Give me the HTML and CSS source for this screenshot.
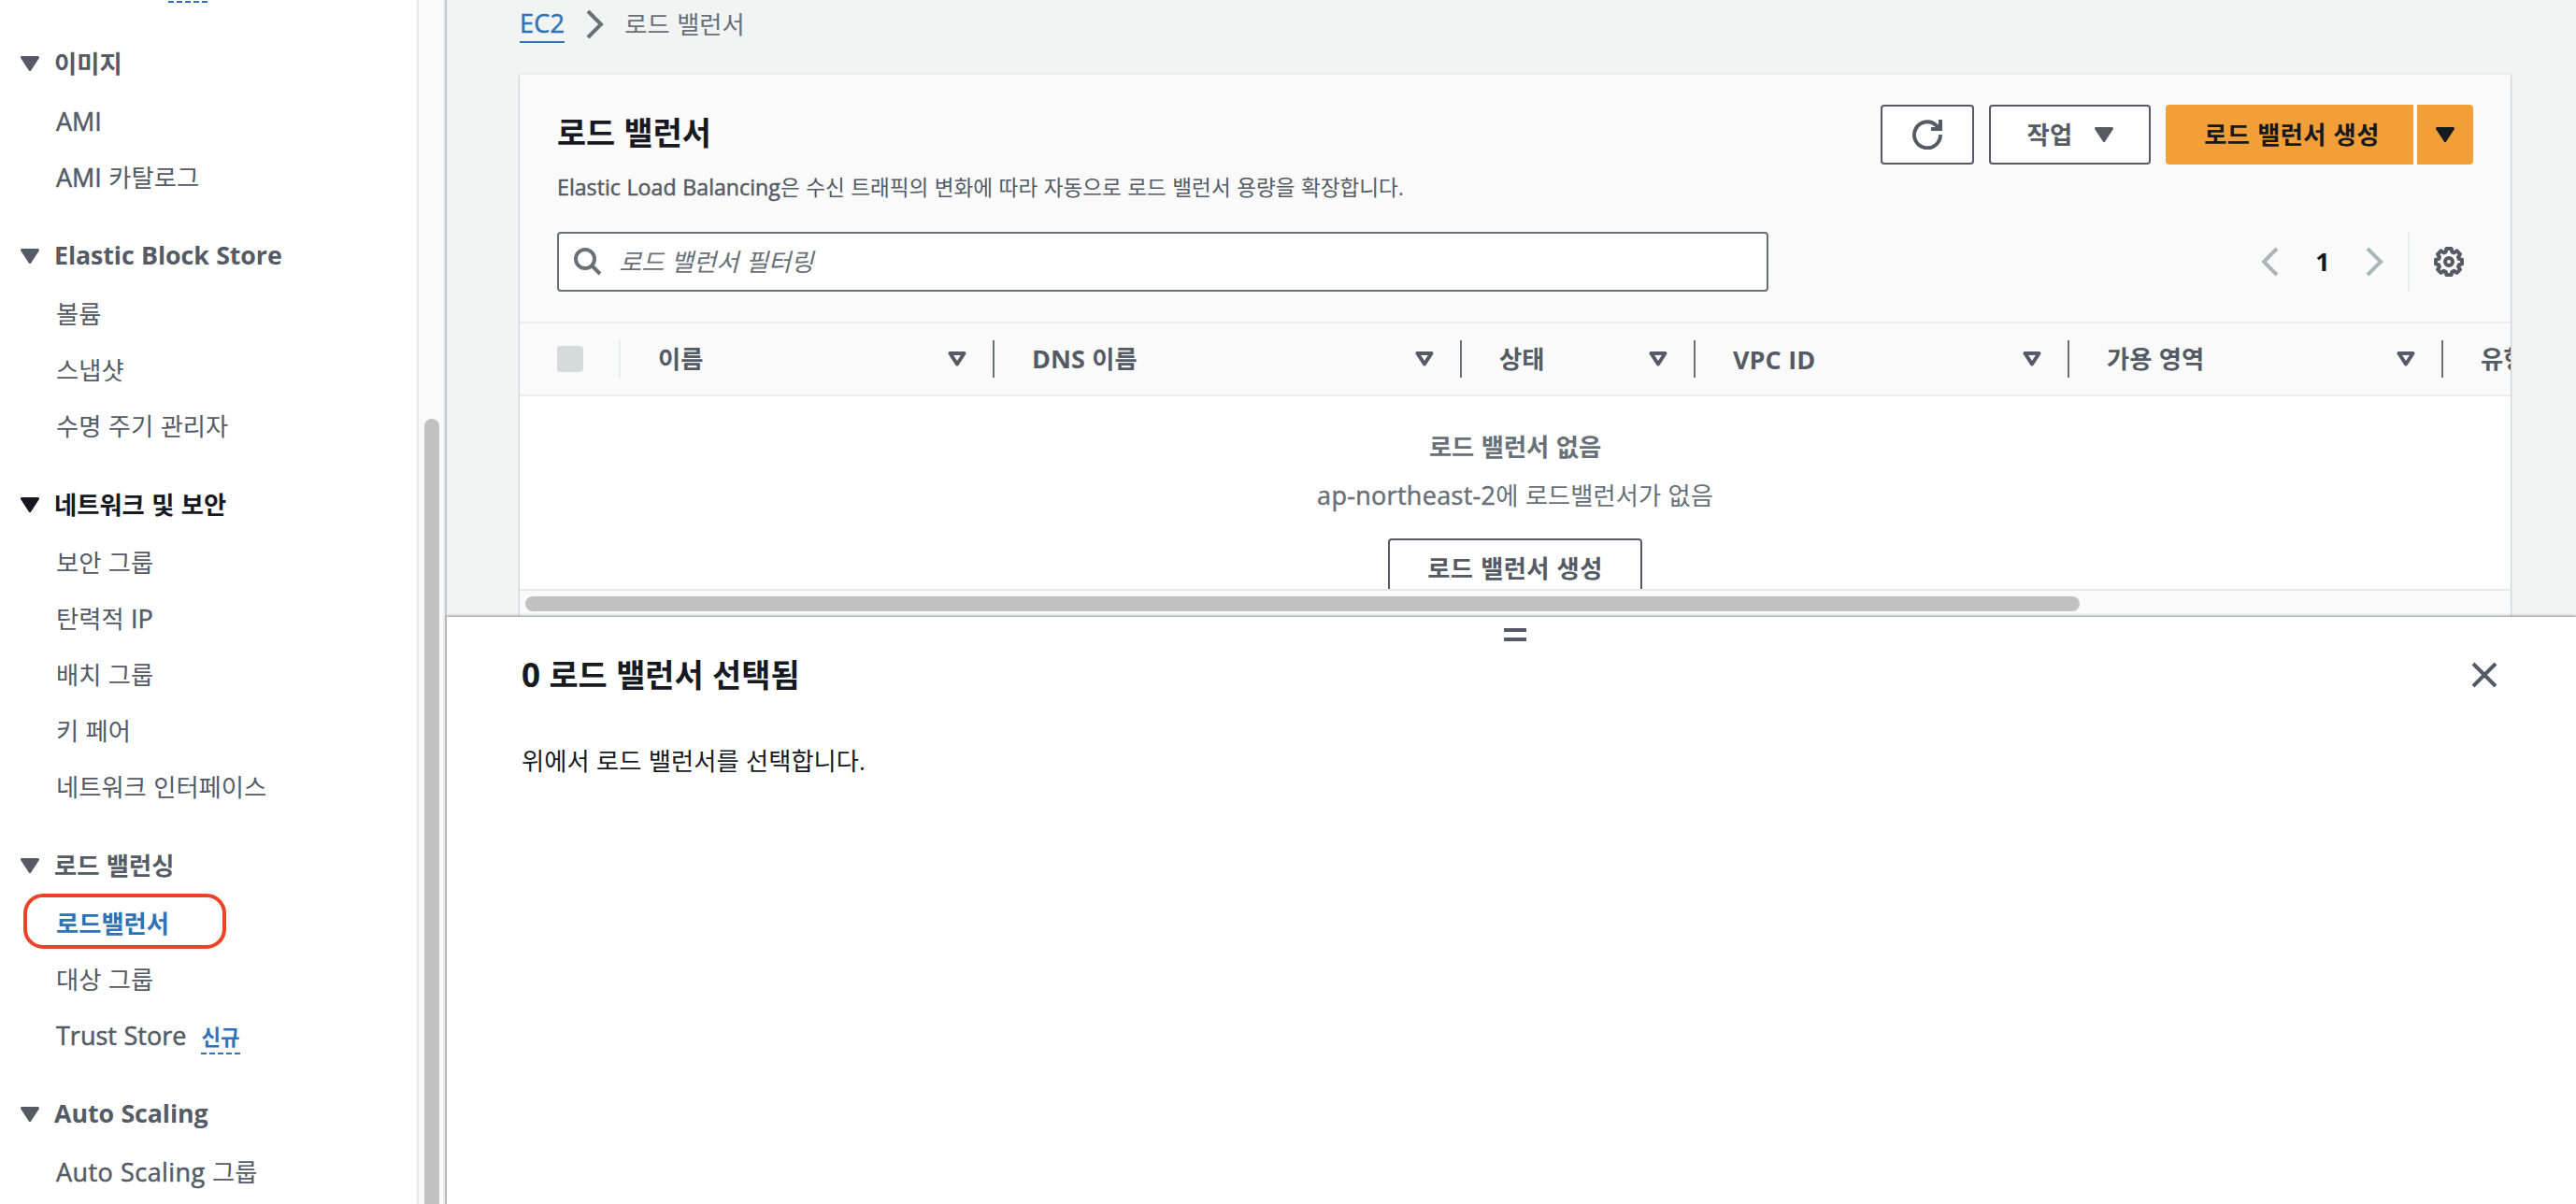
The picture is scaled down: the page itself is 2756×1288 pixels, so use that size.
FILE: index.html
```html
<!DOCTYPE html>
<html lang="ko">
<head>
<meta charset="utf-8">
<title>로드 밸런서 | EC2</title>
<link rel="stylesheet" href="styles.css">
</head>
<body>
<svg class="defs" width="0" height="0">
  <symbol id="caret" viewBox="0 0 20 16"><path d="M1.5 1.5h17L10 14.5z" fill="currentColor" stroke="currentColor" stroke-width="3" stroke-linejoin="round"/></symbol>
  <symbol id="sort" viewBox="0 0 20 16"><path d="M2.5 2h15L10 13.5z" fill="none" stroke="currentColor" stroke-width="4" stroke-linejoin="round"/></symbol>
  <symbol id="chevron" viewBox="0 0 20 32"><path d="M3 2l14 14L3 30" fill="none" stroke="currentColor" stroke-width="4"/></symbol>
</svg>
<div class="app">
  <nav class="side">
    <div class="side-menu">
      <span class="badge-new badge-cut"></span>
      <section>
        <h2><svg class="caret"><use href="#caret"/></svg>이미지</h2>
        <ul><li><span class="en">AMI</span></li><li><span class="en">AMI</span> 카탈로그</li></ul>
      </section>
      <section>
        <h2><svg class="caret"><use href="#caret"/></svg><span class="en">Elastic Block Store</span></h2>
        <ul><li>볼륨</li><li>스냅샷</li><li>수명 주기 관리자</li></ul>
      </section>
      <section>
        <h2 class="dark"><svg class="caret"><use href="#caret"/></svg>네트워크 및 보안</h2>
        <ul><li>보안 그룹</li><li>탄력적 <span class="en">IP</span></li><li>배치 그룹</li><li>키 페어</li><li>네트워크 인터페이스</li></ul>
      </section>
      <section>
        <h2><svg class="caret"><use href="#caret"/></svg>로드 밸런싱</h2>
        <ul><li class="active">로드밸런서</li><li>대상 그룹</li><li><span class="en">Trust Store</span><span class="badge-new">신규</span></li></ul>
      </section>
      <section>
        <h2><svg class="caret"><use href="#caret"/></svg><span class="en">Auto Scaling</span></h2>
        <ul><li><span class="en wide">Auto Scaling</span> 그룹</li></ul>
      </section>
    </div>
    <div class="side-scroll"><div class="side-thumb"></div></div>
  </nav>
  <main class="main">
    <div class="upper">
      <div class="crumbs">
        <a class="en">EC2</a>
        <svg class="chev"><use href="#chevron"/></svg>
        <span>로드 밸런서</span>
      </div>
      <div class="card">
        <header class="card-head">
          <div class="title-row">
            <div class="titles">
              <h1>로드 밸런서</h1>
              <p><span class="en">Elastic Load Balancing</span>은 수신 트래픽의 변화에 따라 자동으로 로드 밸런서 용량을 확장합니다.</p>
            </div>
            <div class="actions">
              <button class="btn refresh"><svg width="34" height="32" viewBox="0 0 34 32"><path d="M31 16A14 14 0 1 1 26.5 6L30 9.5" fill="none" stroke="currentColor" stroke-width="4"/><path d="M31 0V10H21" fill="none" stroke="currentColor" stroke-width="4"/></svg></button>
              <button class="btn menu">작업<svg class="caret"><use href="#caret"/></svg></button>
              <div class="split">
                <button class="btn primary">로드 밸런서 생성</button>
                <button class="btn primary drop"><svg class="caret"><use href="#caret"/></svg></button>
              </div>
            </div>
          </div>
          <div class="tools">
            <div class="search">
              <svg width="30" height="30" viewBox="0 0 30 30"><circle cx="12" cy="12" r="10" fill="none" stroke="currentColor" stroke-width="4"/><path d="M19 19l9 9" stroke="currentColor" stroke-width="4"/></svg>
              <span>로드 밸런서 필터링</span>
            </div>
            <div class="pager">
              <svg class="chev left"><use href="#chevron"/></svg>
              <b class="en">1</b>
              <svg class="chev"><use href="#chevron"/></svg>
              <i class="sep"></i>
              <svg class="gear" width="32" height="32" viewBox="0 0 32 32" fill="none" stroke="currentColor" stroke-width="4" stroke-linejoin="round"><path d="M13.4 2h5.2l.8 3.6 2 .8 3.1-2 3.5 3.6-2 3.1.9 2 3.1.5v4.8l-3.1.8-.9 2 2 3.1-3.5 3.5-3.1-2-2 .9-.8 3.300h-5.200l-.8-3.300-2-.9-3.100 2-3.500-3.500 2-3.100-.9-2-3.100-.8v-4.800l3.100-.5.9-2-2-3.100 3.500-3.600 3.100 2 2-.8z"/><circle cx="16" cy="16" r="4"/></svg>
            </div>
          </div>
        </header>
        <div class="thead">
          <div class="th check"><i class="box"></i></div>
          <div class="th w400">이름<svg class="caret"><use href="#sort"/></svg></div>
          <div class="th w500"><span><span class="en">DNS</span> 이름</span><svg class="caret"><use href="#sort"/></svg></div>
          <div class="th w250">상태<svg class="caret"><use href="#sort"/></svg></div>
          <div class="th w400"><span class="en">VPC ID</span><svg class="caret"><use href="#sort"/></svg></div>
          <div class="th w400">가용 영역<svg class="caret"><use href="#sort"/></svg></div>
          <div class="th w400">유형</div>
        </div>
        <div class="empty">
          <b>로드 밸런서 없음</b>
          <p><span class="en wide">ap-northeast-2</span>에 로드밸런서가 없음</p>
          <button class="btn">로드 밸런서 생성</button>
        </div>
        <div class="hscroll"><div class="hthumb"></div></div>
      </div>
    </div>
    <section class="panel">
      <div class="handle"><i></i><i></i></div>
      <div class="panel-head">
        <h2><span class="en">0</span> 로드 밸런서 선택됨</h2>
        <svg width="28" height="28" viewBox="0 0 28 28"><path d="M2 2l24 24M26 2L2 26" stroke="currentColor" stroke-width="4"/></svg>
      </div>
      <p>위에서 로드 밸런서를 선택합니다.</p>
    </section>
  </main>
  <div class="marker"></div>
</div>
</body>
</html>
```
FILE: styles.css
```css
* { box-sizing: border-box; margin: 0; padding: 0; }
body {
  width: 2756px; height: 1288px; overflow: hidden;
  font-family: "Open Sans", "Noto Sans CJK KR", sans-serif;
  font-size: 26.3px; line-height: 40px; word-spacing: .6px;
  color: #16191f; background: #fff;
}
ul { list-style: none; }
svg { display: block; flex: none; }
.defs { position: absolute; }
.en { font-size: 27px; line-height: 1; }
li .en, p .en, a.en { -webkit-text-stroke: .5px currentColor; }
.wide { letter-spacing: .3px; }
.app { position: relative; display: flex; width: 2756px; height: 1288px; overflow: hidden; }
.caret { width: 20px; height: 16px; }
.chev { width: 20px; height: 32px; }

/* navigation */
.side { display: flex; width: 478px; height: 1288px; color: #545b64; border-right: 2px solid #c3c8cb; }
.side-menu { position: relative; width: 446px; padding-top: 14px; }
.side-menu section { padding-top: 22px; }
.side-menu h2 { display: flex; align-items: center; gap: 16px; height: 64px; padding-left: 22px; font-size: 26.3px; }
.side-menu h2 .en { font-size: 26.8px; letter-spacing: -.1px; padding-bottom: 1px; }
.side-menu h2.dark { color: #16191f; }
.side-menu li { height: 60px; line-height: 60px; padding-left: 60px; white-space: nowrap; }
.side-menu li .wide { letter-spacing: .4px; }
.side-menu li.active { color: #2e73b8; font-weight: 700; }
.badge-new { display: inline-block; margin-left: 16px; height: 34px; line-height: 32px; font-size: 22.4px; font-weight: 700; color: #2e73b8; border-bottom: 2px dashed #2e73b8; }
.badge-cut { position: absolute; left: 164px; top: -31px; width: 42px; }
.side-scroll { width: 30px; height: 1288px; padding: 448px 4px 0 6px; background: #fafafa; border-left: 2px solid #e8e8e8; border-right: 2px solid #ededed; }
.side-thumb { width: 16px; height: 860px; border-radius: 8px; background: #c1c1c1; }
.marker { position: absolute; left: 25px; top: 956px; width: 217px; height: 59px; border: 4px solid #ec4326; border-radius: 21px; }

/* content */
.main { width: 2278px; height: 1288px; }
.upper { height: 660px; padding: 6px 70px 0 78px; background: #f2f3f3; overflow: hidden; }
.crumbs { display: flex; align-items: center; height: 40px; color: #687078; }
.crumbs a { color: #2e73b8; border-bottom: 2px solid #2e73b8; line-height: 38px; height: 40px; letter-spacing: .3px; }
.crumbs .chev { margin: 0 22px; }
.card { margin-top: 32px; height: 582px; border-top: 2px solid #eaeded; background: #fff; box-shadow: 0 2px 2px #889095; }
.card-head { height: 266px; padding: 32px 40px 0; background: #fafafa; border-bottom: 2px solid #eaeded; }
.title-row { display: flex; justify-content: space-between; height: 136px; }
.titles h1 { height: 60px; line-height: 60px; font-size: 33.8px; }
.titles p { margin-top: 9px; height: 40px; font-size: 22.6px; color: #545b64; white-space: nowrap; }
.titles p .en { font-size: 23.2px; }
.actions { display: flex; gap: 16px; height: 64px; }
.btn { display: flex; align-items: center; justify-content: center; height: 64px; padding: 0 40px; border: 2px solid #545b64; border-radius: 4px; background: #fff; color: #545b64; font: inherit; font-weight: 700; letter-spacing: .35px; word-spacing: .6px; white-space: nowrap; }
.refresh { width: 100px; padding: 0; }
.menu { width: 173px; gap: 23px; padding: 0; }
.split { display: flex; gap: 4px; background: #fff; }
.primary { width: 265px; padding: 0 0 0 5px; border: 0; border-radius: 4px 0 0 4px; background: #f29f38; color: #16191f; }
.primary.drop { width: 60px; padding: 0; border-radius: 0 4px 4px 0; }
.tools { display: flex; justify-content: space-between; }
.search { display: flex; align-items: center; gap: 18px; width: 1296px; height: 64px; padding-left: 16px; border: 2px solid #687078; border-radius: 4px; background: #fff; color: #687078; font-style: italic; }
.pager { display: flex; align-items: center; height: 64px; padding-right: 10px; color: #aab7b8; }
.pager b { width: 91px; padding: 0 0 1px 1px; text-align: center; color: #16191f; }
.left { transform: scaleX(-1); }
.sep { width: 2px; height: 64px; margin: 0 26px; background: #eaeded; }
.gear { color: #545b64; }
.thead { display: flex; height: 78px; background: #fafafa; border-bottom: 2px solid #eaeded; overflow: hidden; color: #545b64; font-weight: 700; }
.th { position: relative; display: flex; flex: none; align-items: center; justify-content: space-between; height: 76px; padding: 0 30px 0 40px; }
.th::after { content: ""; position: absolute; right: 0; top: 18px; width: 2px; height: 40px; background: #687078; }
.check { width: 108px; }
.check::after { background: #eaeded; }
.box { width: 28px; height: 28px; border-radius: 4px; background: #d5dbdb; }
.w400 { width: 400px; }
.w500 { width: 500px; }
.w250 { width: 250px; }
.empty { display: flex; flex-direction: column; align-items: center; height: 206px; padding-top: 34px; overflow: hidden; color: #687078; }
.empty p { margin-top: 12px; }
.empty .btn { flex: none; width: 272px; padding: 0; margin-top: 26px; }
.hscroll { height: 30px; padding: 6px; border-top: 2px solid #e8e8e8; background: #fafafa; }
.hthumb { width: 1663px; height: 16px; border-radius: 8px; background: #c1c1c1; }

/* split panel */
.panel { position: relative; height: 628px; padding: 12px 80px 0; background: #fff; box-shadow: 0 -1px 3px #889095; }
.handle { display: flex; flex-direction: column; align-items: center; gap: 6px; padding-left: 8px; }
.handle i { width: 24px; height: 4px; background: #545b64; }
.panel-head { display: flex; align-items: center; justify-content: space-between; height: 60px; margin-top: 6px; padding-right: 4px; color: #545b64; }
.panel-head h2 { font-size: 33.9px; color: #16191f; }
.panel-head h2 .en { font-size: 35px; }
.panel > p { margin-top: 42px; }
```
